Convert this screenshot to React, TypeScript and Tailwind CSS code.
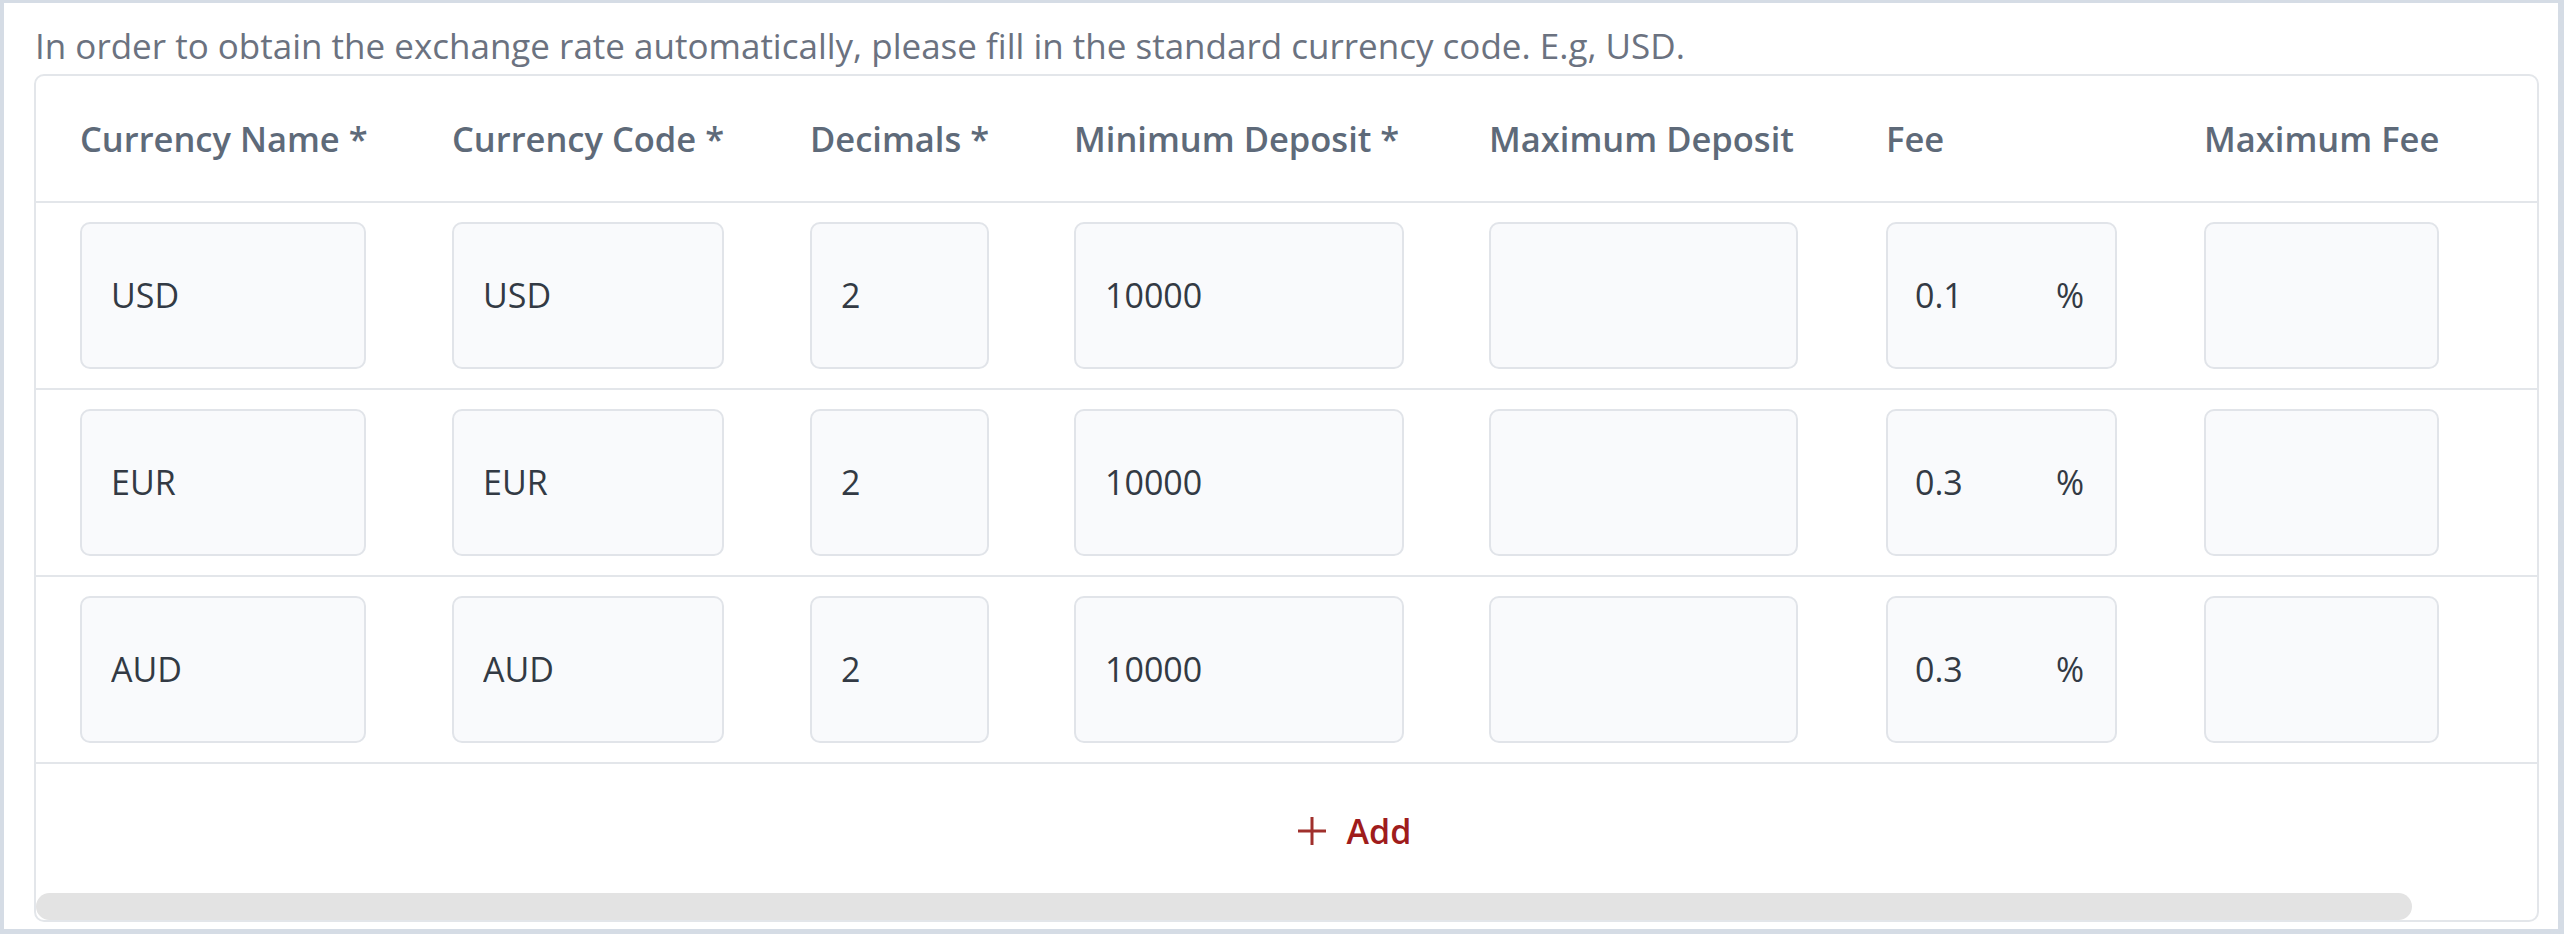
import React from "react";

type Row = {
  name: string;
  code: string;
  decimals: string;
  minDeposit: string;
  maxDeposit: string;
  fee: string;
  maxFee: string;
};

const rows: Row[] = [
  { name: "USD", code: "USD", decimals: "2", minDeposit: "10000", maxDeposit: "", fee: "0.1", maxFee: "" },
  { name: "EUR", code: "EUR", decimals: "2", minDeposit: "10000", maxDeposit: "", fee: "0.3", maxFee: "" },
  { name: "AUD", code: "AUD", decimals: "2", minDeposit: "10000", maxDeposit: "", fee: "0.3", maxFee: "" },
];

function Field({ value, w }: { value: string; w: string }) {
  return (
    <div
      className={`${w} h-[147px] flex items-center px-[29px] rounded-[10px] border-2 border-[#e1e4e9] bg-[#f9fafc] text-[34px] text-[#333a44]`}
    >
      <span className="truncate">{value}</span>
    </div>
  );
}

function FeeField({ value }: { value: string }) {
  return (
    <div className="w-[231px] h-[147px] flex items-center justify-between pl-[27px] pr-[31px] rounded-[10px] border-2 border-[#e1e4e9] bg-[#f9fafc] text-[34px] text-[#333a44]">
      <span>{value}</span>
      <span>%</span>
    </div>
  );
}

export default function App() {
  return (
    <div className="font-['Open_Sans',sans-serif] w-[2564px] h-[934px] bg-white border-t-[3px] border-l-[4px] border-r-[6px] border-b-[5px] border-[#d5dce5] pl-[30px] pr-[19px] pt-[20px] overflow-hidden">
      <p className="text-[35px] leading-[45px] text-[#6b7280] ml-[1px] mb-[6px] whitespace-nowrap">
        In order to obtain the exchange rate automatically, please fill in the standard currency code. E.g, USD.
      </p>
      <div className="w-[2505px] h-[848px] border-2 border-[#e3e6ea] rounded-[10px] overflow-hidden flex flex-col">
        <div className="w-[2637px] flex-1 flex flex-col">
          {/* header */}
          <div className="h-[127px] flex items-center border-b-2 border-[#e3e6ea] text-[34.5px] font-semibold text-[#5e6a79] whitespace-nowrap">
            <div className="w-[372px] pl-[44px]">Currency Name *</div>
            <div className="w-[358px] pl-[44px]">Currency Code *</div>
            <div className="w-[264px] pl-[44px]">Decimals *</div>
            <div className="w-[415px] pl-[44px]">Minimum Deposit *</div>
            <div className="w-[397px] pl-[44px]">Maximum Deposit</div>
            <div className="w-[318px] pl-[44px]">Fee</div>
            <div className="w-[513px] pl-[44px]">Maximum Fee</div>
          </div>
          {rows.map((r, i) => (
            <div key={i} className="h-[187px] flex items-center border-b-2 border-[#e3e6ea]">
              <div className="w-[372px] pl-[44px]">
                <Field value={r.name} w="w-[286px]" />
              </div>
              <div className="w-[358px] pl-[44px]">
                <Field value={r.code} w="w-[272px]" />
              </div>
              <div className="w-[264px] pl-[44px]">
                <Field value={r.decimals} w="w-[179px]" />
              </div>
              <div className="w-[415px] pl-[44px]">
                <Field value={r.minDeposit} w="w-[330px]" />
              </div>
              <div className="w-[397px] pl-[44px]">
                <Field value={r.maxDeposit} w="w-[309px]" />
              </div>
              <div className="w-[318px] pl-[44px]">
                <FeeField value={r.fee} />
              </div>
              <div className="w-[513px] pl-[44px]">
                <Field value={r.maxFee} w="w-[235px]" />
              </div>
            </div>
          ))}
          {/* add row */}
          <div className="flex-1 flex items-center justify-center pt-[5px]">
            <button className="flex items-center gap-[21px] text-[34px] font-semibold text-[#9f1c1c] cursor-pointer">
              <svg width="28" height="28" viewBox="0 0 28 28" fill="none" stroke="#a0302c" strokeWidth="3">
                <path d="M0 14h28M14 0v28" />
              </svg>
              <span>Add</span>
            </button>
          </div>
        </div>
        {/* scrollbar */}
        <div className="h-[27px] shrink-0 flex items-start">
          <div className="w-[2376px] h-[27px] rounded-full bg-[#e3e3e3]" />
        </div>
      </div>
    </div>
  );
}
